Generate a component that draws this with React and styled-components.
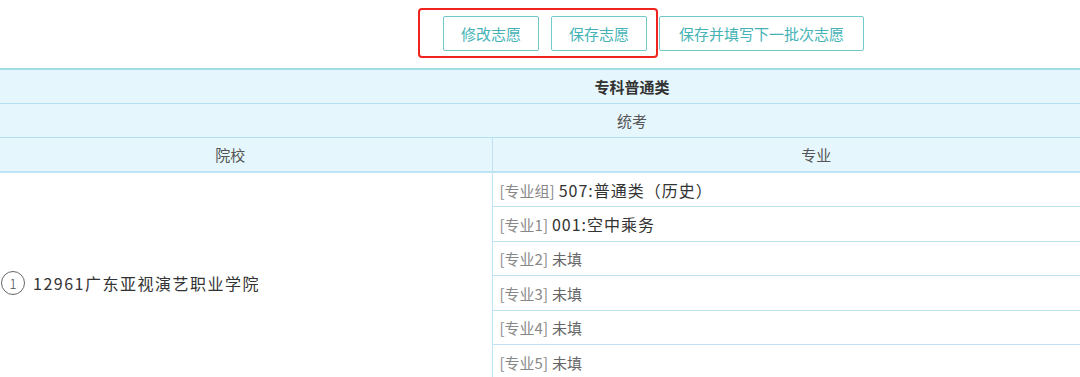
import styled, { createGlobalStyle } from 'styled-components';

const GlobalStyle = createGlobalStyle`
    body {
        margin: 0;
        background: #fff;
        font-family: "Noto Sans CJK SC", "Noto Sans", sans-serif;
        overflow: hidden;
    }
`;

const majors = [
    { label: '[专业组]', value: '507:普通类（历史）', filled: true },
    { label: '[专业1]', value: '001:空中乘务', filled: true },
    { label: '[专业2]', value: '未填' },
    { label: '[专业3]', value: '未填' },
    { label: '[专业4]', value: '未填' },
    { label: '[专业5]', value: '未填' },
];

function App() {
    return (
        <Page>
            <GlobalStyle />
            <Toolbar>
                <Highlight>
                    <ActionButton>修改志愿</ActionButton>
                    <ActionButton>保存志愿</ActionButton>
                </Highlight>
                <ActionButton $wide>保存并填写下一批次志愿</ActionButton>
            </Toolbar>
            <TableWrap>
                <Table>
                    <colgroup>
                        <col style={{ width: 492 }} />
                        <col />
                    </colgroup>
                    <thead>
                        <tr>
                            <HeadCell colSpan={2} $bold>专科普通类</HeadCell>
                        </tr>
                        <tr>
                            <HeadCell colSpan={2}>统考</HeadCell>
                        </tr>
                        <tr>
                            <HeadCell $shift={31} $last>院校</HeadCell>
                            <HeadCell $shift={124} $divider $last>专业</HeadCell>
                        </tr>
                    </thead>
                    <tbody>
                        {majors.map((m, i) => (
                            <tr key={m.label}>
                                {i === 0 && (
                                    <SchoolCell rowSpan={majors.length}>
                                        <School>
                                            <Circled>1</Circled>
                                            <span>12961广东亚视演艺职业学院</span>
                                        </School>
                                    </SchoolCell>
                                )}
                                <MajorCell>
                                    <Tag>{m.label}</Tag>
                                    <Value $filled={m.filled}>{m.value}</Value>
                                </MajorCell>
                            </tr>
                        ))}
                    </tbody>
                </Table>
            </TableWrap>
        </Page>
    );
}

const Page = styled.div`
    width: 1080px;
    height: 377px;
    overflow: hidden;
`;

const Toolbar = styled.div`
    display: flex;
    align-items: flex-start;
    height: 68px;
    padding: 8px 0 0 418px;
    box-sizing: border-box;
`;

const Highlight = styled.div`
    display: flex;
    gap: 12px;
    padding: 6px 9px 5px 23px;
    border: 2px solid #f0231e;
    border-radius: 4px;
`;

const ActionButton = styled.button`
    height: 35px;
    width: ${(p) => (p.$wide ? '205px' : '96px')};
    margin-top: ${(p) => (p.$wide ? '8px' : '0')};
    margin-left: ${(p) => (p.$wide ? '1px' : '0')};
    padding: 0;
    background: #fff;
    border: 1px solid #72c9c9;
    border-radius: 2px;
    color: #45b3b6;
    font-family: "Noto Sans CJK SC", sans-serif;
    font-size: 15px;
    cursor: pointer;
`;

const TableWrap = styled.div`
    width: 1080px;
    overflow: hidden;
`;

const Table = styled.table`
    width: 1264px;
    border-collapse: collapse;
    table-layout: fixed;
    border-top: 2px solid #9fdfe1;
`;

const HeadCell = styled.th`
    height: 33px;
    padding: 0 ${(p) => p.$shift || 0}px 0 0;
    background: #e5f6fd;
    border-bottom: ${(p) => (p.$last ? '2px solid #bde3f4' : '1px solid #b5dff2')};
    border-left: ${(p) => (p.$divider ? '1px solid #bde3f4' : '0')};
    color: ${(p) => (p.$bold ? '#333' : '#555')};
    font-size: 15px;
    font-weight: ${(p) => (p.$bold ? 700 : 400)};
    text-align: center;
`;

const SchoolCell = styled.td`
    padding: 14px 0 0 1px;
    vertical-align: middle;
`;

const School = styled.div`
    display: flex;
    align-items: center;
    gap: 8px;
    color: #333;
    font-size: 16px;
    letter-spacing: 1.5px;
`;

const Circled = styled.span`
    display: flex;
    flex: 0 0 24px;
    align-items: center;
    justify-content: center;
    width: 24px;
    min-width: 24px;
    height: 24px;
    box-sizing: border-box;
    border: 1px solid #666;
    border-radius: 50%;
    color: #555;
    font-size: 14px;
    font-weight: 300;
    line-height: 1;
    letter-spacing: 0;
`;

const MajorCell = styled.td`
    height: 33.4px;
    padding: 0 0 0 7px;
    border-left: 1px solid #bde3f4;
    border-bottom: 1px solid #bfe2f5;
    white-space: nowrap;
`;

const Tag = styled.span`
    color: #888;
    font-size: 15px;
    margin-right: 4px;
`;

const Value = styled.span`
    color: ${(p) => (p.$filled ? '#333' : '#666')};
    font-size: ${(p) => (p.$filled ? '16px' : '15px')};
    letter-spacing: ${(p) => (p.$filled ? '1px' : '0')};
`;

export default App;
